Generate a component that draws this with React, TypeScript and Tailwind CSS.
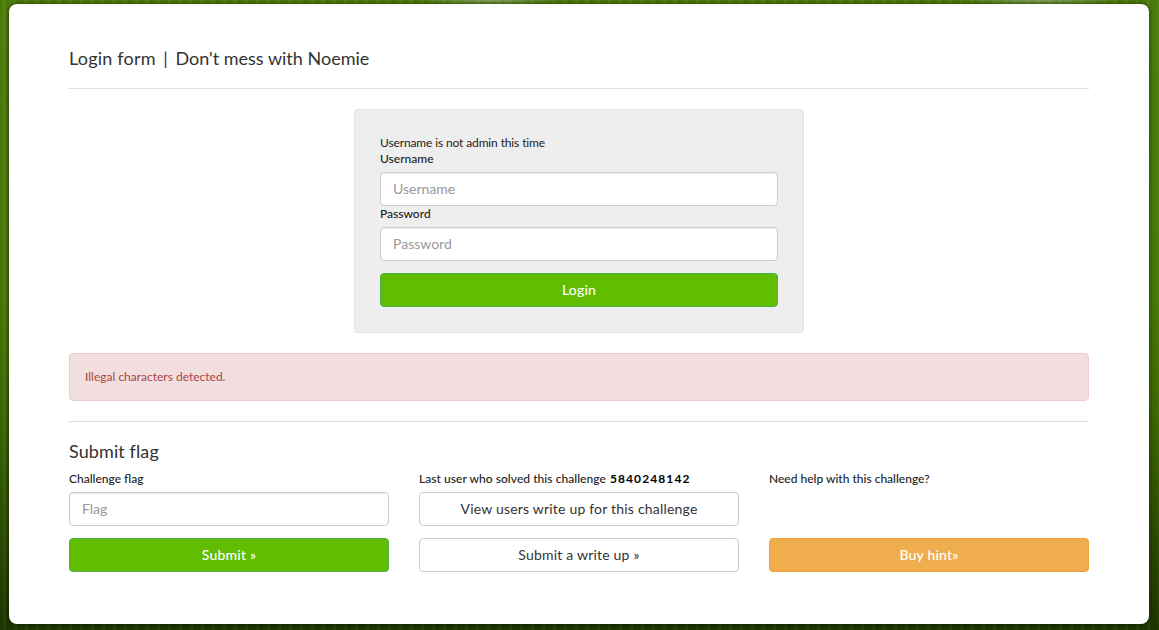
const field = "h-[34px] w-full rounded border border-[#ccc] bg-white px-3 pb-[2px] text-sm text-[#333] shadow-[inset_0_1px_1px_rgba(0,0,0,0.075)] placeholder:text-[#999]";
const greenButton = "h-[34px] w-full rounded border border-[#4cae4c] bg-[#60bd00] text-sm font-medium tracking-[0.2px] text-white";
const whiteButton = "h-[34px] w-full rounded border border-[#ccc] bg-white text-sm tracking-[0.2px] text-[#333]";

export default function App() {
  return (
    <div className="h-[630px] overflow-hidden bg-[radial-gradient(ellipse_70px_5px_at_490px_0,rgba(190,200,170,0.55),transparent),radial-gradient(ellipse_80px_5px_at_1040px_0,rgba(190,200,170,0.55),transparent),repeating-linear-gradient(90deg,rgba(0,0,0,0.1)_0px,rgba(0,0,0,0)_2px,rgba(255,255,255,0.05)_5px,rgba(0,0,0,0.08)_7px,rgba(0,0,0,0)_11px),linear-gradient(180deg,#4f800c_0%,#4a7c08_45%,#3f6a04_65%,#2b4d02_85%,#1e3600_100%)] px-[9px] pt-1 font-['Lato','Noto_Sans',sans-serif] text-[#333]">
      <div className="h-[620px] w-[1140px] rounded-lg bg-white px-[60px] pt-[44px] shadow-[0_0_5px_rgba(0,0,0,0.6)]">
        <h1 className="text-lg leading-5">
          <span className="tracking-[0.2px]">Login form</span>
          <span className="mx-[3px]"> | </span>
          Don't mess with Noemie
        </h1>
        <hr className="mt-5 border-[#ddd]" />

        <div className="mx-auto mt-5 h-[224px] w-[450px] rounded border border-[#e3e3e3] bg-[#eee] px-[25px] pt-[25px] text-xs text-[#222]">
          <p className="pb-[1px] leading-[15px] tracking-[-0.13px]">Username is not admin this time</p>
          <form>
            <label className="block font-medium leading-[15px]">Username</label>
            <input className={`${field} mt-[6px]`} placeholder="Username" />
            <label className="block font-medium leading-[15px]">Password</label>
            <input className={`${field} mt-[6px]`} type="password" placeholder="Password" />
            <button type="button" className={`${greenButton} mt-3`}>Login</button>
          </form>
        </div>

        <div className="mt-5 flex h-12 items-center rounded border border-[#ebccd1] bg-[#f2dede] px-[15px] text-xs text-[#a94442]">
          Illegal characters detected.
        </div>
        <hr className="mt-5 border-[#ddd]" />

        <h2 className="mt-[19px] text-lg leading-5 tracking-[0.1px]">Submit flag</h2>
        <div className="mt-[11px] grid grid-cols-3 gap-x-[30px] text-xs text-[#222]">
          <div>
            <label className="block font-medium leading-[14px]">Challenge flag</label>
            <input className={`${field} mt-[6px]`} placeholder="Flag" />
            <button type="button" className={`${greenButton} mt-3`}>Submit »</button>
          </div>
          <div>
            <p className="font-medium leading-[14px] tracking-[0.05px]">Last user who solved this challenge <span className="ml-[1px] font-bold tracking-[1.1px] text-black">5840248142</span></p>
            <button type="button" className={`${whiteButton} mt-[6px]`}>View users write up for this challenge</button>
            <button type="button" className={`${whiteButton} mt-3`}>Submit a write up »</button>
          </div>
          <div>
            <p className="font-medium leading-[14px]">Need help with this challenge?</p>
            <button type="button" className="mt-[52px] h-[34px] w-full rounded border border-[#eea236] bg-[#f0ad4e] text-sm font-medium tracking-[0.2px] text-white">Buy hint»</button>
          </div>
        </div>
      </div>
    </div>
  );
}
